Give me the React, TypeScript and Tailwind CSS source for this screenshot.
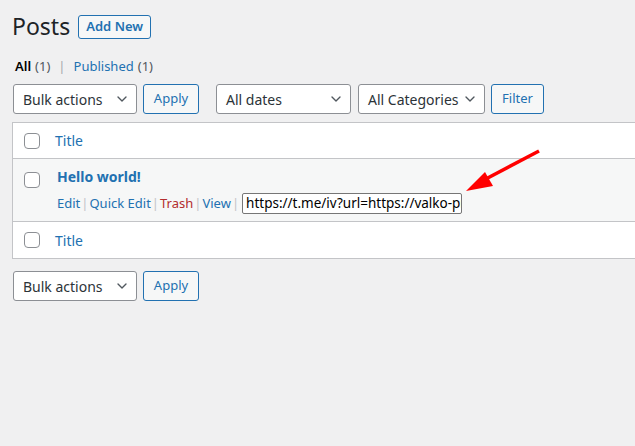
import { ChevronDown } from "lucide-react";

const font = { fontFamily: '"Noto Sans", "Open Sans", sans-serif' };

function Select({ label, width }: { label: string; width: string }) {
  return (
    <div
      className={`relative flex h-[30px] items-center rounded-[3px] border border-[#8c8f94] bg-white pl-[9px] text-[14px] text-[#2c3338] ${width}`}
    >
      <span>{label}</span>
      <ChevronDown className="absolute right-[6px] top-[6px] h-[16px] w-[16px] text-[#50575e]" strokeWidth={2} />
    </div>
  );
}

function SecondaryButton({ label, width }: { label: string; width: string }) {
  return (
    <button
      className={`flex h-[30px] items-center justify-center rounded-[3px] border border-[#2271b1] bg-[#f6f7f7] text-[13px] text-[#2271b1] ${width}`}
    >
      {label}
    </button>
  );
}

function Checkbox() {
  return <span className="block h-[16px] w-[16px] rounded-[4px] border border-[#8c8f94] bg-white" />;
}

function Sep() {
  return <span className="px-[1px] text-[#c3c4c7]">|</span>;
}

export default function App() {
  return (
    <div className="relative min-h-screen overflow-hidden bg-[#f0f0f1] pl-3 pt-[12px] text-[#1d2327]" style={font}>
      <div className="flex items-center">
        <h1 className="text-[23px] leading-[29px] font-normal">Posts</h1>
        <button className="ml-[8px] mt-[1px] flex h-[24px] w-[73px] items-center justify-center rounded-[3px] border border-[#2271b1] bg-[#f6f7f7] text-[13px] font-semibold text-[#2271b1]">
          Add New
        </button>
      </div>

      <div className="mt-[15px] flex items-center pl-[3px] text-[13px] leading-[20px]">
        <span className="font-semibold text-black">All</span>
        <span className="ml-[4px] text-[#50575e]">(1)</span>
        <span className="px-[8px] text-[#a7aaad]">|</span>
        <span className="text-[#2271b1]">Published</span>
        <span className="ml-[4px] text-[#50575e]">(1)</span>
      </div>

      <div className="ml-px mt-[8px] flex items-center">
        <Select label="Bulk actions" width="w-[124px]" />
        <div className="ml-[6px]">
          <SecondaryButton label="Apply" width="w-[56px]" />
        </div>
        <div className="ml-[17px]">
          <Select label="All dates" width="w-[135px]" />
        </div>
        <div className="ml-[7px]">
          <Select label="All Categories" width="w-[127px]" />
        </div>
        <div className="ml-[6px]">
          <SecondaryButton label="Filter" width="w-[53px]" />
        </div>
      </div>

      <div className="mr-[-20px] mt-[8px] border border-[#c3c4c7] bg-white">
        <div className="flex h-[36px] items-center border-b border-[#c3c4c7]">
          <div className="ml-[11px] w-[31px]">
            <Checkbox />
          </div>
          <span className="text-[14px] text-[#2271b1]">Title</span>
        </div>

        <div className="flex h-[63px] border-b border-[#c3c4c7] bg-[#f6f7f7]">
          <div className="ml-[11px] mt-[13px] w-[33px]">
            <Checkbox />
          </div>
          <div className="flex flex-col">
            <span className="mt-[7px] text-[14px] leading-[22px] font-bold text-[#2271b1]">Hello world!</span>
            <div className="mt-[5px] flex items-center text-[13px] text-[#2271b1]">
              <span>Edit</span>
              <Sep />
              <span>Quick Edit</span>
              <Sep />
              <span className="text-[#b32d2e]">Trash</span>
              <Sep />
              <span>View</span>
              <Sep />
              <div className="ml-[2px] flex h-[21px] w-[220px] items-center overflow-hidden whitespace-nowrap rounded-[2px] border border-[#767676] bg-white pl-[3px] text-[13.5px] text-black">
                https://t.me/iv?url=https://valko-pro.ru
              </div>
            </div>
          </div>
        </div>

        <div className="flex h-[36px] items-center">
          <div className="ml-[11px] w-[31px]">
            <Checkbox />
          </div>
          <span className="text-[14px] text-[#2271b1]">Title</span>
        </div>
      </div>

      <div className="ml-px mt-[12px] flex items-center">
        <Select label="Bulk actions" width="w-[124px]" />
        <div className="ml-[6px]">
          <SecondaryButton label="Apply" width="w-[56px]" />
        </div>
      </div>

      <svg className="pointer-events-none absolute left-0 top-0" width="635" height="446">
        <line x1="539" y1="151" x2="482" y2="181" stroke="#ff0000" strokeWidth="3.5" />
        <polygon points="466,191 485,172 493,186" fill="#ff0000" />
      </svg>
    </div>
  );
}
